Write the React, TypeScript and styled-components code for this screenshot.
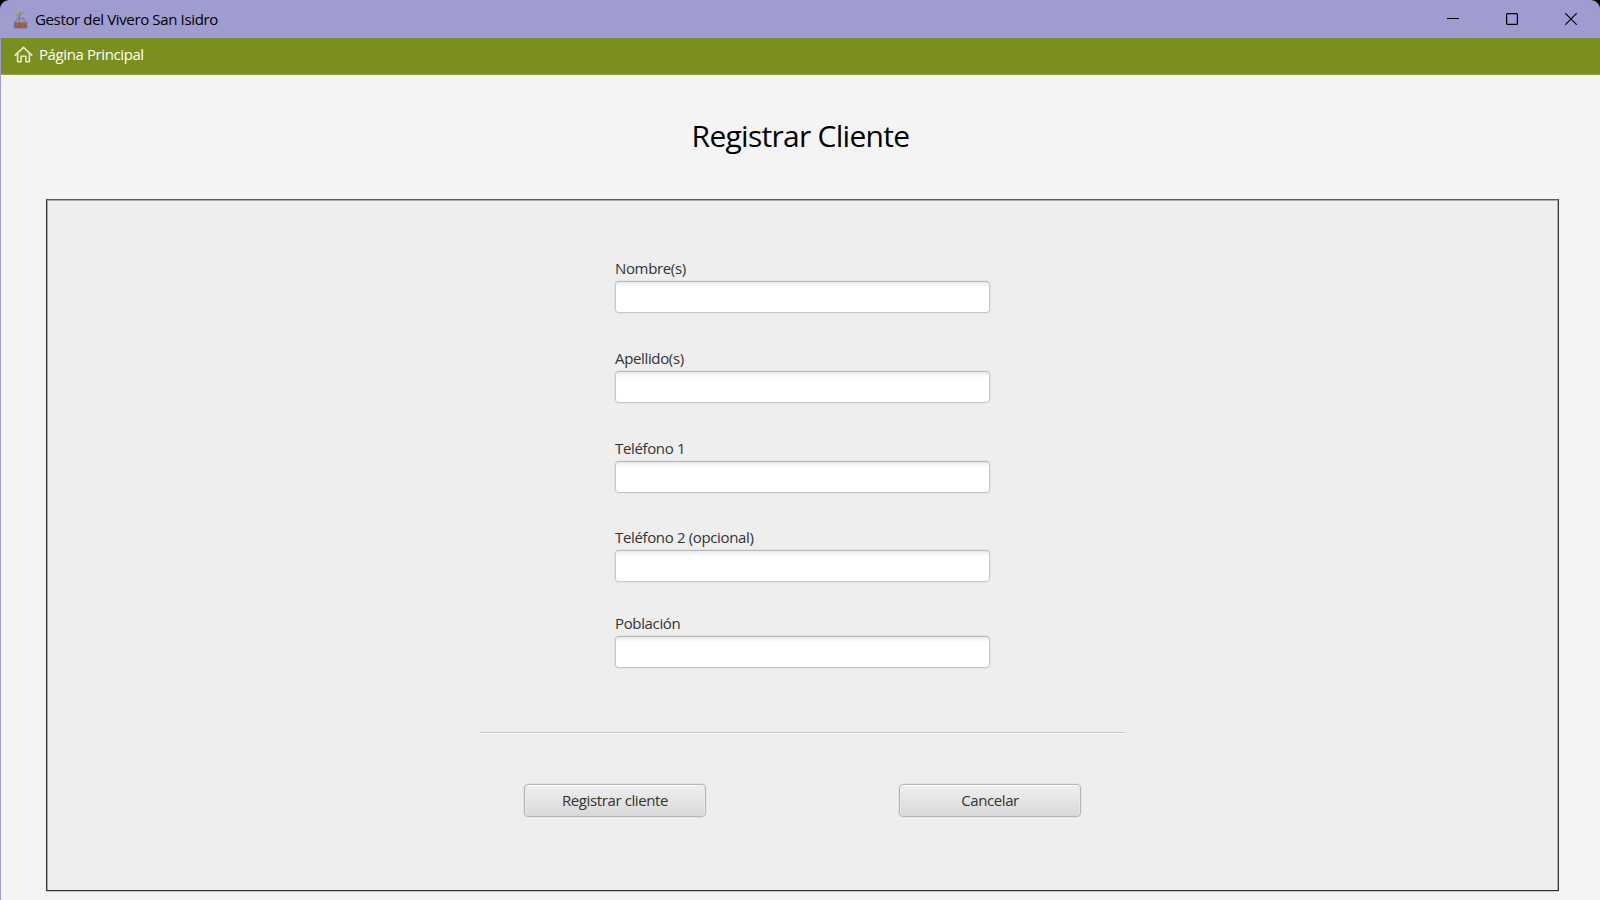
import React from 'react';
import styled, { createGlobalStyle } from 'styled-components';

const GlobalStyle = createGlobalStyle`
  * { box-sizing: border-box; }
  body {
    margin: 0;
    background: #000;
    overflow: hidden;
    font-family: "Segoe UI", "Open Sans", "Noto Sans", sans-serif;
    font-size: 15px;
  }
`;

const Window = styled.div`
  display: flex;
  flex-direction: column;
  width: 1600px;
  height: 900px;
  overflow: hidden;
  border-radius: 9px 9px 0 0;
  background: #9f9dd0;
`;

const TitleBar = styled.header`
  display: flex;
  align-items: center;
  flex: 0 0 38px;
  padding-left: 13px;
`;

const WindowTitle = styled.span`
  flex: 1;
  margin-left: 7px;
  line-height: 20px;
  letter-spacing: -0.36px;
  color: #000;
`;

const WindowControls = styled.div`
  display: flex;
  gap: 47px;
  padding-right: 23px;
`;

const Content = styled.div`
  display: flex;
  flex-direction: column;
  flex: 1;
  margin-left: 1px;
  background: #f4f4f4;
`;

const MenuBar = styled.nav`
  display: flex;
  align-items: flex-start;
  flex: 0 0 37px;
  padding: 6px 0 0 13px;
  border-bottom: 1px solid #96a64b;
  background: #7a8f1d;
`;

const MenuItem = styled.a`
  display: flex;
  align-items: center;
  gap: 6px;
  height: 20px;
  line-height: 20px;
  letter-spacing: -0.4px;
  color: #fff;
`;

const PageTitle = styled.h1`
  margin: 41px 0 43px;
  font-size: 30px;
  font-weight: 400;
  line-height: 40px;
  letter-spacing: -0.72px;
  text-align: center;
  color: #000;
`;

const Panel = styled.main`
  display: flex;
  flex-direction: column;
  align-items: center;
  width: 1513px;
  height: 692px;
  margin-left: 45px;
  padding-top: 58px;
  border: 1px solid #333;
  border-top-color: #5c5c5c;
  box-shadow: inset 1px 1px 0 #a9a9a9, inset -1px 0 0 #b4b4b4, 0 1px 0 #c8c8c8;
  background: #eee;
`;

const Field = styled.label<{ $gap: number }>`
  display: flex;
  flex-direction: column;
  gap: 3px;
  width: 375px;
  margin-bottom: ${p => p.$gap}px;
`;

const FieldLabel = styled.span`
  line-height: 20px;
  letter-spacing: -0.35px;
  color: #333;
`;

const TextInput = styled.input`
  height: 32px;
  padding: 0 9px;
  border: 1px solid #c9c9c9;
  border-top-color: #b9b9b9;
  border-radius: 4px;
  outline: 0;
  box-shadow: 0 0 0 1px rgba(0, 0, 0, 0.04);
  background: linear-gradient(#e9e9e9, #f7f7f7 3px, #fff 6px);
  font: inherit;
`;

const Separator = styled.hr`
  width: 645px;
  height: 2px;
  margin: 0;
  border: 0;
  border-top: 1px solid #c6c6c6;
  background: #fafafa;
`;

const Actions = styled.div`
  display: flex;
  justify-content: space-between;
  width: 557px;
  margin-top: 50px;
`;

const Button = styled.button`
  width: 182px;
  height: 33px;
  padding: 0 0 2px;
  border: 1px solid #b6b6b6;
  border-radius: 4px;
  box-shadow: inset 0 1px 0 #fafafa, inset 1px 0 0 #e9e9e9, inset -1px 0 0 #e9e9e9, 0 0 0 1px rgba(0, 0, 0, 0.04);
  background: linear-gradient(#efefef, #d9d9d9);
  font: inherit;
  letter-spacing: -0.39px;
  color: #333;
`;

const PlantIcon = () => (
  <svg width="15" height="20" viewBox="0 0 15 20" fill="none">
    <path d="M4 10.500V9h7v1.500l3 3v5.500H1v-5.500z" fill="#9290bd" stroke="#767caf" />
    <rect x="1.500" y="13.500" width="12" height="5.500" rx="1" fill="#965b46" />
    <path d="M3 15.500h3M8 17h3M9 15h3" stroke="#aa6a50" />
    <path d="M6.500 13V2.500M6.500 8L3.500 5.500M6.500 6l3-2" stroke="#77825f" />
    <ellipse cx="6" cy="1.800" rx="1.600" ry="1.200" fill="#aab63a" />
    <ellipse cx="9.700" cy="3.500" rx="1.500" ry="1" fill="#98a54c" />
    <ellipse cx="3.500" cy="5.300" rx="1.400" ry="1" fill="#98a54c" />
    <ellipse cx="8.200" cy="11.500" rx="1.400" ry="1" fill="#aab63a" />
  </svg>
);

const HomeIcon = () => (
  <svg width="19" height="17" viewBox="0 0 19 17" fill="none" stroke="#e8edd2" strokeWidth="1.600" strokeLinecap="round" strokeLinejoin="round">
    <path d="M1.200 9.200L9.500 1.300l8.300 7.900M3.600 7.500v8.300h3.500v-5.500h4.800v5.500h3.500V7.500" />
  </svg>
);

const MinimizeIcon = () => (
  <svg width="12" height="12" viewBox="0 0 12 12"><path d="M0 5.500h12" stroke="#000" /></svg>
);

const MaximizeIcon = () => (
  <svg width="12" height="12" viewBox="0 0 12 12"><rect x=".6" y=".6" width="10.800" height="10.800" rx="1" fill="none" stroke="#000" strokeWidth="1.200" /></svg>
);

const CloseIcon = () => (
  <svg width="12" height="12" viewBox="0 0 12 12"><path d="M.3.300l11.400 11.400M11.700.300L.3 11.700" stroke="#000" strokeWidth="1.200" /></svg>
);

const fields = [
  { label: 'Nombre(s)', gap: 35 },
  { label: 'Apellido(s)', gap: 35 },
  { label: 'Teléfono 1', gap: 34 },
  { label: 'Teléfono 2 (opcional)', gap: 31 },
  { label: 'Población', gap: 64 },
];

export default function App() {
  return (
    <>
      <GlobalStyle />
      <Window>
        <TitleBar>
          <PlantIcon />
          <WindowTitle>Gestor del Vivero San Isidro</WindowTitle>
          <WindowControls>
            <MinimizeIcon />
            <MaximizeIcon />
            <CloseIcon />
          </WindowControls>
        </TitleBar>
        <Content>
          <MenuBar>
            <MenuItem>
              <HomeIcon />
              Página Principal
            </MenuItem>
          </MenuBar>
          <PageTitle>Registrar Cliente</PageTitle>
          <Panel>
            {fields.map(f => (
              <Field key={f.label} $gap={f.gap}>
                <FieldLabel>{f.label}</FieldLabel>
                <TextInput />
              </Field>
            ))}
            <Separator />
            <Actions>
              <Button>Registrar cliente</Button>
              <Button>Cancelar</Button>
            </Actions>
          </Panel>
        </Content>
      </Window>
    </>
  );
}
